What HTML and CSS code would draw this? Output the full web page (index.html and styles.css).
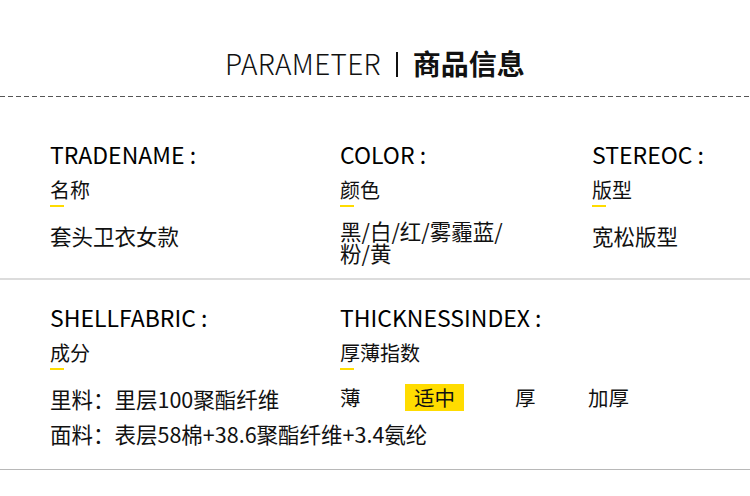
FILE: index.html
```html
<!DOCTYPE html>
<html lang="zh">
<head>
<meta charset="utf-8">
<link rel="stylesheet" href="styles.css">
</head>
<body>
<div class="page">
  <header class="head">
    <h1 class="title"><span class="en">PARAMETER</span><span class="bar"></span><span class="cn">商品信息</span></h1>
  </header>
  <div class="dash"></div>

  <section class="row row1">
    <div class="item">
      <div class="label">TRADENAME :</div>
      <div class="sub">名称</div>
      <div class="mark"></div>
      <div class="value">套头卫衣女款</div>
    </div>
    <div class="item">
      <div class="label">COLOR :</div>
      <div class="sub">颜色</div>
      <div class="mark"></div>
      <div class="value wrap">黑/白/红/雾霾蓝/粉/黄</div>
    </div>
    <div class="item">
      <div class="label">STEREOC :</div>
      <div class="sub">版型</div>
      <div class="mark"></div>
      <div class="value">宽松版型</div>
    </div>
  </section>

  <section class="row row2">
    <div class="item">
      <div class="label">SHELLFABRIC :</div>
      <div class="sub">成分</div>
      <div class="mark"></div>
      <div class="value lines">
        <div class="line">里料：里层100聚酯纤维</div>
        <div class="line nowrap">面料：表层58棉+38.6聚酯纤维+3.4氨纶</div>
      </div>
    </div>
    <div class="item">
      <div class="label">THICKNESSINDEX :</div>
      <div class="sub">厚薄指数</div>
      <div class="mark"></div>
      <div class="opts">
        <span class="opt o1">薄</span>
        <span class="opt o2"><span class="hl">适中</span></span>
        <span class="opt o3">厚</span>
        <span class="opt o4">加厚</span>
      </div>
    </div>
  </section>
</div>
</body>
</html>
```

FILE: styles.css
```css
* { box-sizing: border-box; }
html, body { margin: 0; padding: 0; background: #fff; }
body {
  font-family: "Noto Sans CJK SC", "Noto Sans", sans-serif;
  color: #111;
  width: 750px;
  height: 496px;
  overflow: hidden;
}
.head {
  height: 96px;
  padding-top: 45px;
}
.title {
  margin: 0;
  display: flex;
  justify-content: center;
  align-items: center;
  height: 36px;
  font-size: 28px;
  line-height: 36px;
  font-weight: 400;
}
.title .en {
  font-weight: 300;
  letter-spacing: 0.3px;
}
.title .bar {
  display: inline-block;
  width: 2px;
  height: 25px;
  background: #111;
  margin: 2px 15px 0 15px;
}
.title .cn {
  font-weight: 700;
}
.dash {
  height: 1px;
  background: repeating-linear-gradient(to right, #555 0 5px, transparent 5px 8px);
}
.row {
  display: grid;
  padding-left: 50px;
}
.row1 {
  grid-template-columns: 290px 252px 1fr;
  height: 183px;
  padding-top: 42px;
  border-bottom: 2px solid #dcdcdc;
}
.row2 {
  grid-template-columns: 290px 1fr;
  height: 190px;
  padding-top: 22px;
  border-bottom: 1px solid #b8b8b8;
}
.label {
  font-size: 23px;
  line-height: 30px;
  font-weight: 400;
  color: #000;
  white-space: nowrap;
}
.sub {
  font-size: 20px;
  line-height: 28px;
  margin-top: 7px;
}
.mark {
  width: 14px;
  height: 2px;
  background: #ffdc00;
  margin-top: 1px;
}
.value {
  font-size: 21.5px;
  line-height: 21px;
  margin-top: 18px;
}
.value.wrap {
  width: 185px;
  line-height: 22px;
  margin-top: 13px;
}
.lines {
  margin-top: 11px;
}
.line {
  line-height: 35px;
}
.nowrap { white-space: nowrap; }
.opts {
  display: grid;
  grid-template-columns: 65px 110px 73px auto;
  align-items: center;
  font-size: 20.5px;
  margin-top: 12px;
  height: 27px;
}
.hl {
  display: inline-block;
  background: #ffdc00;
  padding: 0 9px;
  height: 27px;
  line-height: 27px;
}
```
